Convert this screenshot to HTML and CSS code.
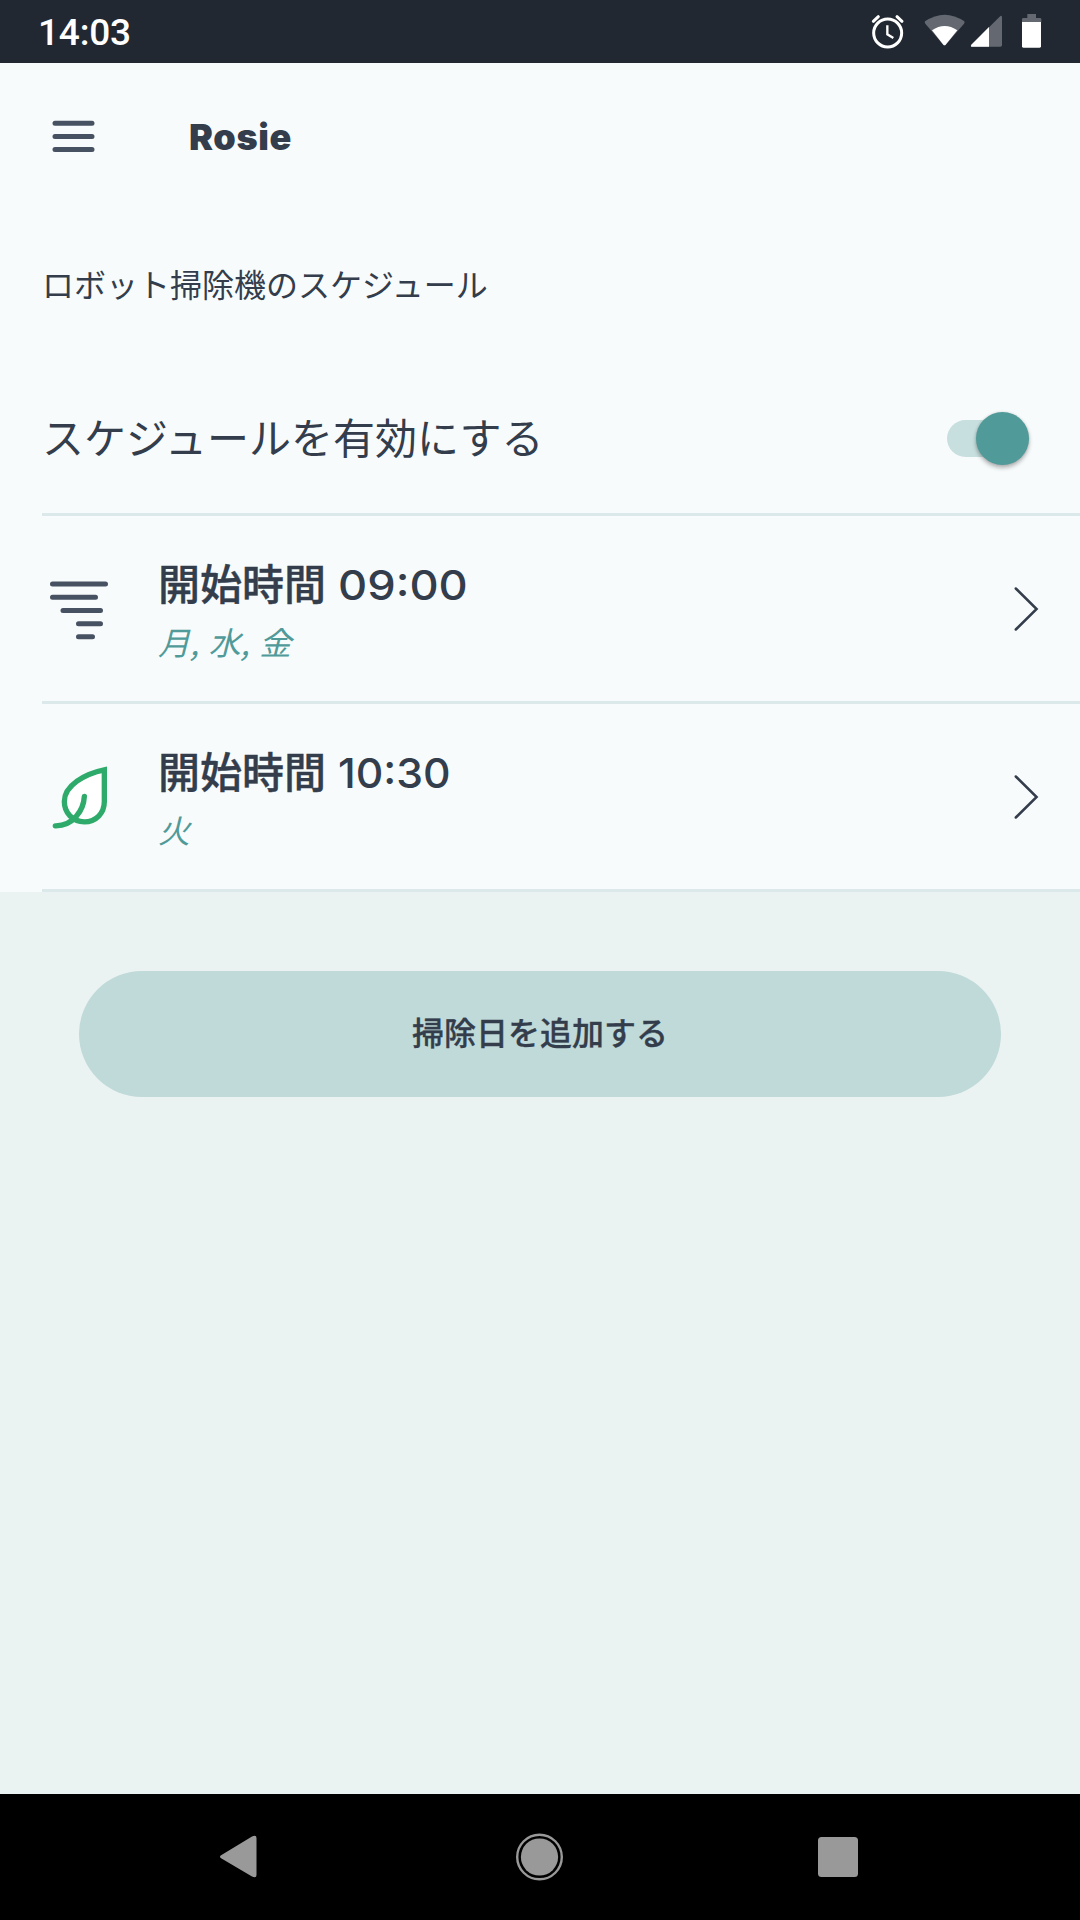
FILE: index.html
```html
<!DOCTYPE html>
<html lang="ja">
<head>
<meta charset="utf-8">
<title>Rosie</title>
<link rel="stylesheet" href="styles.css">
</head>
<body>
<div class="status-bar">
  <span class="clock">14:03</span>
  <svg class="status-icons" viewBox="0 0 720 189">
    <g fill="none" stroke="#fff" stroke-linecap="round">
      <circle cx="143" cy="99" r="42" stroke-width="9"/>
      <path d="M142 76V103L160 114" stroke-width="7" stroke-linecap="butt"/>
      <path d="M100 64L115 50M171 50L186 64" stroke-width="9"/>
    </g>
    <path d="M255 64Q314 24 373 64Q375 67 372 71L317 134Q314 137 310 134L256 71Q253 67 255 64Z" fill="#646971"/>
    <path d="M276 91Q314 65 352 91L317 134Q314 137 310 134Z" fill="#fff"/>
    <path d="M394 134L479 50Q486 44 486 53V136Q486 140 481 140H397Q390 140 394 134Z" fill="#646971"/>
    <path d="M394 134L447 81V140H397Q390 140 394 134Z" fill="#fff"/>
    <path d="M546 67V58Q546 54 550 54H562V42H588V54H600Q604 54 604 58V67Z" fill="#646971"/>
    <path d="M546 66H603V139Q603 143 599 143H550Q546 143 546 139Z" fill="#fff"/>
  </svg>
</div>
<header class="app-bar">
  <svg class="menu-icon" viewBox="0 0 44 34"><path d="M3 3.3H40M3 16.5H40M3 29.6H40"/></svg>
  <h1 class="app-title">Rosie</h1>
</header>
<main class="content">
  <section class="settings">
    <h2 class="section-title">ロボット掃除機のスケジュール</h2>
    <div class="enable-row">
      <span class="enable-label">スケジュールを有効にする</span>
      <span class="toggle"><span class="thumb"></span></span>
    </div>
    <div class="schedule-row">
      <svg class="mode-icon" viewBox="0 0 72 72"><path class="turbo" d="M10.5 11H63.500M10.500 24.200H53.500M21 37.500H58.500M36.500 50.700H58.500M36.500 63.800H50.500"/></svg>
      <div class="schedule-text">
        <div class="start">開始時間<span class="time nine">09:00</span></div>
        <div class="days">月, 水, 金</div>
      </div>
      <svg class="chevron" viewBox="0 0 26 46"><path d="M1.8 2.500L22.600 23L1.800 43.500"/></svg>
    </div>
    <div class="schedule-row">
      <svg class="mode-icon" viewBox="0 0 216 216"><path class="leaf" d="M187 26.500V121.500C187 156.500 162 182.500 127 182.500S67 155.500 67 121.500C67 73.500 128 38.500 187 26.500Z" fill="#fff"/><path class="leaf stem" d="M127 106.500C125 146.500 94 195.500 40 194.500"/></svg>
      <div class="schedule-text">
        <div class="start">開始時間<span class="time ten">10:30</span></div>
        <div class="days">火</div>
      </div>
      <svg class="chevron" viewBox="0 0 26 46"><path d="M1.8 2.500L22.600 23L1.800 43.500"/></svg>
    </div>
  </section>
  <button class="add-button">掃除日を追加する</button>
</main>
<nav class="nav-bar">
  <svg viewBox="0 0 48 48"><path d="M5.500 22L36 3.500Q40.500 1.500 40.500 5V42Q40.500 45.500 36 43.500L5.500 25.500Q2.500 23.700 5.500 22Z" fill="#999"/></svg>
  <svg viewBox="0 0 48 48"><circle cx="24.500" cy="24" r="22.300" fill="none" stroke="#999" stroke-width="2.400"/><circle cx="24.500" cy="24" r="18.600" fill="#999"/></svg>
  <svg viewBox="0 0 48 48"><rect x="4" y="4" width="40" height="40" rx="3.500" fill="#999"/></svg>
</nav>
</body>
</html>
```
FILE: styles.css
```css
* { box-sizing: border-box; }
body {
  margin: 0;
  width: 1080px;
  height: 1920px;
  display: flex;
  flex-direction: column;
  overflow: hidden;
  background: #eaf3f2;
  color: #333d4b;
  font-family: Inter, "Noto Sans CJK JP", sans-serif;
}
svg { display: block; flex: none; }
.status-bar {
  height: 63px;
  flex: none;
  display: flex;
  align-items: center;
  justify-content: space-between;
  padding-left: 38px;
  background: #222831;
}
.clock { color: #fff; font: 500 37px/63px Roboto, sans-serif; padding-top: 2px; letter-spacing: -0.2px; }
.status-icons { width: 240px; height: 63px; }
.app-bar {
  height: 147px;
  flex: none;
  display: flex;
  align-items: center;
  padding-left: 52px;
  background: #f8fbfc;
}
.menu-icon { width: 44px; height: 34px; }
.menu-icon path { fill: none; stroke: #465161; stroke-width: 5; stroke-linecap: round; }
.app-title { margin: 0 0 0 93px; font-size: 36px; line-height: 44px; font-weight: 900; letter-spacing: 0.6px; }
.content { flex: 1; }
.settings { height: 682px; padding-left: 42px; background: #f8fbfc; }
.section-title {
  margin: 0;
  height: 152px;
  padding-top: 49px;
  font: 400 32px/48px "Noto Sans CJK JP", sans-serif;
}
.enable-row, .schedule-row {
  display: flex;
  align-items: center;
  border-bottom: 3px solid #dce9eb;
}
.enable-row { height: 154px; padding: 2px 51px 0 0; justify-content: space-between; }
.enable-label { font: 400 42px/60px "Noto Sans CJK JP", sans-serif; padding-bottom: 6px; }
.toggle {
  width: 82px;
  height: 37px;
  border-radius: 19px;
  background: #c7dfdf;
  display: flex;
  align-items: center;
  justify-content: flex-end;
}
.thumb {
  width: 53px;
  height: 53px;
  flex: none;
  border-radius: 50%;
  background: #509a99;
  box-shadow: 0 3px 4px rgba(0, 0, 0, .28), 0 0 3px rgba(0, 0, 0, .12);
}
.schedule-row { height: 188px; padding-right: 40px; }
.mode-icon { width: 72px; height: 72px; }
.turbo { fill: none; stroke: #465161; stroke-width: 5; stroke-linecap: round; }
.leaf { stroke: #2eaa6a; stroke-width: 16; stroke-linecap: round; }
.stem { fill: none; }
.schedule-text { flex: 1; margin-left: 44px; }
.start {
  padding-top: 3px;
  font: 500 42px/60px "Noto Sans CJK JP", sans-serif;
  white-space: nowrap;
  -webkit-text-stroke: 0.4px #333d4b;
}
.time {
  display: inline-block;
  font: 450 41.500px/60px Inter, sans-serif;
  transform-origin: left center;
  -webkit-text-stroke: 0;
}
.nine { margin-left: 12px; transform: scaleX(1.09); }
.ten { margin-left: 12px; transform: scaleX(1.03); }
.days { color: #509a99; font: italic 400 32px/53px "Noto Sans CJK JP", sans-serif; word-spacing: 2.500px; }
.chevron { width: 26px; height: 46px; }
.chevron path { fill: none; stroke: #333d4b; stroke-width: 2.500; stroke-linecap: round; }
.add-button {
  display: block;
  width: 922px;
  height: 126px;
  margin: 79px auto 0;
  padding: 0 0 6px;
  border: 0;
  border-radius: 63px;
  background: #c0d9d9;
  color: #333d4b;
  font: 500 32px/48px "Noto Sans CJK JP", sans-serif;
  -webkit-text-stroke: 0.3px #333d4b;
}
.nav-bar {
  height: 126px;
  flex: none;
  display: flex;
  align-items: center;
  justify-content: space-between;
  padding: 0 218px 0 216px;
  background: #000;
}
.nav-bar svg { width: 48px; height: 48px; }
```
